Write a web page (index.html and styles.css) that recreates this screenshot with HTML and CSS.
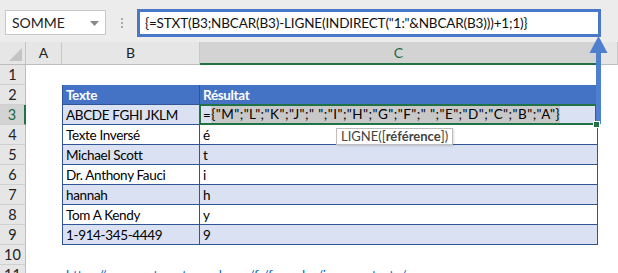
FILE: index.html
```html
<!DOCTYPE html>
<html lang="fr">
<head>
    <meta charset="UTF-8">
    <meta name="viewport" content="width=device-width, initial-scale=1.0">
    <title>STXT inverser texte</title>
    <link rel="stylesheet" href="styles.css">
</head>
<body>

    <div class="topbar">
        <div class="namebox">
            <span>SOMME</span>
            <svg class="caret" width="9" height="5" viewBox="0 0 9 5"><polygon points="0,0 9,0 4.5,5" fill="#8a8a8a"/></svg>
        </div>
        <div class="grip"><i></i><i></i><i></i></div>
        <div class="formula">{=STXT(B3;NBCAR(B3)-LIGNE(INDIRECT("1:"&amp;NBCAR(B3)))+1;1)}</div>
    </div>

    <div class="sheet">
        <!-- column headers -->
        <div class="corner">
            <svg width="13" height="13" viewBox="0 0 13 13"><polygon points="13,0 13,13 0,13" fill="#c4c4c4"/></svg>
        </div>
        <div class="ch">A</div>
        <div class="ch">B</div>
        <div class="ch sel">C</div>
        <div class="ch"></div>

        <!-- row 1 -->
        <div class="rh">1</div>
        <div class="c"></div><div class="c"></div><div class="c"></div><div class="c"></div>

        <!-- row 2 -->
        <div class="rh">2</div>
        <div class="c"></div>
        <div class="t b head">Texte</div>
        <div class="t cc head">Résultat</div>
        <div class="c"></div>

        <!-- row 3 -->
        <div class="rh sel">3</div>
        <div class="c"></div>
        <div class="t b alt">ABCDE FGHI JKLM</div>
        <div class="t cc alt active">=<span class="hl">{"M";"L";"K";"J";" ";"I";"H";"G";"F";" ";"E";"D";"C";"B";"A"}</span><span class="handle"></span></div>
        <div class="c"></div>

        <div class="rh">4</div>
        <div class="c"></div>
        <div class="t b">Texte Inversé</div>
        <div class="t cc">é</div>
        <div class="c"></div>

        <div class="rh">5</div>
        <div class="c"></div>
        <div class="t b alt">Michael Scott</div>
        <div class="t cc alt">t</div>
        <div class="c"></div>

        <div class="rh">6</div>
        <div class="c"></div>
        <div class="t b">Dr. Anthony Fauci</div>
        <div class="t cc">i</div>
        <div class="c"></div>

        <div class="rh">7</div>
        <div class="c"></div>
        <div class="t b alt">hannah</div>
        <div class="t cc alt">h</div>
        <div class="c"></div>

        <div class="rh">8</div>
        <div class="c"></div>
        <div class="t b">Tom A Kendy</div>
        <div class="t cc">y</div>
        <div class="c"></div>

        <div class="rh">9</div>
        <div class="c"></div>
        <div class="t b alt">1-914-345-4449</div>
        <div class="t cc alt">9</div>
        <div class="c"></div>

        <div class="rh">10</div>
        <div class="c"></div><div class="c"></div><div class="c"></div><div class="c"></div>

        <div class="rh">11</div>
        <div class="c"></div>
        <div class="c link">https://www.automateexcel.com/fr/formules/inverser-texte/</div>
        <div class="c"></div><div class="c"></div>
    </div>

    <!-- tooltip for the formula argument -->
    <div class="tip">LIGNE([<b>référence</b>])</div>

    <!-- annotation arrow from the cell to the formula bar -->
    <svg class="arrow" width="24" height="90" viewBox="0 0 24 90">
        <rect x="9" y="16" width="5" height="72" fill="#4f7fcf"/>
        <polygon points="2.5,17 11.5,0 20.5,17" fill="#4f7fcf"/>
    </svg>

</body>
</html>
```

FILE: styles.css
```css
body {
    margin: 0;
    width: 618px;
    height: 273px;
    overflow: hidden;
    background-color: #fff;
    font-family: Lato, "Liberation Sans", sans-serif;
    position: relative;
}

.topbar {
    height: 42px;
    box-sizing: border-box;
    background-color: #ececec;
    display: flex;
    align-items: flex-start;
    padding: 9px 0 0 5px;
}

.namebox {
    margin-top: 1px;
    width: 101px;
    height: 25px;
    box-sizing: border-box;
    background-color: #fff;
    border: 1px solid #c8c8c8;
    display: flex;
    align-items: center;
    justify-content: space-between;
    padding: 0 6px 0 6px;
    font-size: 14px;
    color: #222;
}

.caret {
    margin-top: 1px;
}

.grip {
    margin: 9px 0 0 15px;
    width: 3px;
    display: flex;
    flex-direction: column;
    gap: 2px;
}

.grip i {
    width: 2px;
    height: 2px;
    background-color: #a8a8a8;
}

.formula {
    margin-left: 13px;
    width: 464px;
    height: 28px;
    box-sizing: border-box;
    border: 3px solid #4a78c9;
    background-color: #fff;
    padding-left: 5px;
    font-size: 13.5px;
    letter-spacing: -0.15px;
    line-height: 22px;
    color: #111;
    white-space: nowrap;
}

.sheet {
    display: grid;
    grid-template-columns: 26px 36px 138px 398px 20px;
    grid-template-rows: 23px repeat(11, 20px);
    font-size: 13.5px;
    letter-spacing: -0.35px;
}

.corner {
    background-color: #e6e6e6;
    border-right: 1px solid #c4c4c4;
    border-bottom: 1px solid #bdbdbd;
    display: flex;
    align-items: flex-end;
    justify-content: flex-end;
    padding: 0 3px 3px 0;
}

.ch {
    background-color: #e6e6e6;
    border-right: 1px solid #c8c8c8;
    border-bottom: 1px solid #bdbdbd;
    text-align: center;
    font-size: 14px;
    letter-spacing: 0;
    line-height: 22px;
    color: #222;
}

.ch.sel {
    background-color: #d3d3d3;
    border-bottom: 2px solid #217346;
    color: #1d6a40;
}

.rh {
    background-color: #e6e6e6;
    border-right: 1px solid #bdbdbd;
    border-bottom: 1px solid #d0d0d0;
    text-align: center;
    font-size: 14.5px;
    letter-spacing: 0;
    line-height: 19px;
    color: #222;
}

.rh.sel {
    background-color: #d3d3d3;
    border-right: 2px solid #217346;
    color: #1d6a40;
}

.c {
    white-space: nowrap;
    line-height: 20px;
}

.t {
    border-bottom: 1px solid #2f5597;
    padding-left: 3px;
    line-height: 20px;
    white-space: nowrap;
    color: #000;
}

.t.b {
    border-left: 1px solid #2f5597;
    border-right: 1px solid #2f5597;
}

.t.cc {
    border-right: 1px solid #2f5597;
}

.t.head {
    background-color: #4472c4;
    color: #fff;
    font-weight: bold;
}

.t.alt {
    background-color: #d9e1f2;
}

.active {
    position: relative;
    letter-spacing: 0.45px;
}

.active::after {
    content: '';
    position: absolute;
    left: -1px;
    top: -1px;
    right: 0;
    bottom: -1px;
    border: 2px solid #217346;
}

.hl {
    display: inline-block;
    vertical-align: top;
    background-color: #c8c8c8;
    line-height: 19px;
}

.handle {
    position: absolute;
    right: -3px;
    bottom: -4px;
    width: 5px;
    height: 5px;
    background-color: #217346;
    border: 1px solid #fff;
    z-index: 1;
}

.link {
    padding-left: 4px;
    color: #0563c1;
    text-decoration: underline;
}

.tip {
    position: absolute;
    left: 336px;
    top: 128px;
    height: 17px;
    box-sizing: border-box;
    padding: 0 4px;
    background-color: #fff;
    border: 1px solid #bdbdbd;
    box-shadow: 1px 1px 2px rgba(0, 0, 0, 0.15);
    font-size: 13px;
    line-height: 15px;
    color: #444;
    white-space: nowrap;
}

.arrow {
    position: absolute;
    left: 587px;
    top: 36px;
}
```
